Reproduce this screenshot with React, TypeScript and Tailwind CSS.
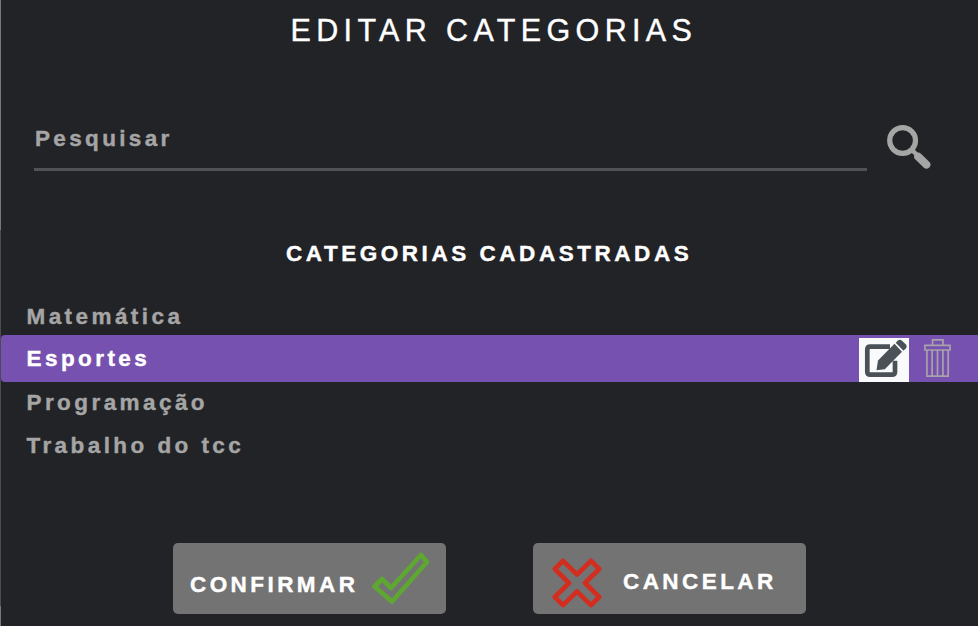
const rows = ["Matemática", "Esportes", "Programação", "Trabalho do tcc"];

function SearchIcon() {
  return (
    <svg className="mt-[-2px] ml-5 h-[46px] w-[46px]" viewBox="0 0 46 46" fill="none" stroke="#a5a5a5">
      <circle cx="15.6" cy="17.5" r="12.9" strokeWidth="5.2" />
      <path d="M24 26L30 32" strokeWidth="4.4" />
      <path d="M31.2 33.7L39.4 41.6" strokeWidth="8" strokeLinecap="round" />
    </svg>
  );
}

function EditIcon() {
  return (
    <svg className="h-[44px] w-[50px] bg-[#f9fafc]" viewBox="0 0 50 44">
      <path d="M31 8.6H11.3Q8.3 8.6 8.3 11.6V33.7Q8.3 36.7 11.3 36.7H33Q36 36.7 36 33.7V22.7" fill="none" stroke="#4a5157" strokeWidth="4.7" />
      <path d="M17.5 32.2L19 22.5L35.5 5.8L43 13.7L25.8 31.2Z" fill="#4a5157" />
      <path d="M36.7 4.8L39 2.6Q41 1 43 2.8L47 6.5Q48.5 8.4 47 10.3L44.4 12.8Z" fill="#4a5157" />
      <path d="M35.8 5L44.2 13.5" stroke="#f9fafc" strokeWidth="0.8" />
    </svg>
  );
}

function TrashIcon() {
  return (
    <svg className="ml-[15px] h-[44px] w-7" viewBox="0 0 28 44" fill="none" stroke="#a7a3a9" strokeWidth="1.7">
      <path d="M8.6 7V1.9H19V7M.9 7.3H26V12H.9ZM2.9 12V38.2H24.2V12M8.1 12V38M13.5 12V38M18.9 12V38" />
    </svg>
  );
}

export default function App() {
  return (
    <main className="flex h-[626px] w-[978px] bg-[#222327] font-['Liberation_Sans',Arial,sans-serif] text-[22.5px] leading-[43px] font-bold tracking-[3.43px] text-white [-webkit-text-stroke:0.4px]">
      <div className="flex w-px shrink-0 flex-col">
        <div className="h-[230px] bg-[#77787a]" />
        <div className="h-[376px] bg-[#4b4c50]" />
        <div className="h-5 bg-[#77787a]" />
      </div>
      <div className="flex min-w-0 flex-1 flex-col">
        <h1 className="mt-[9px] ml-[289.5px] text-[30.5px] font-normal tracking-[5.35px] whitespace-nowrap">EDITAR CATEGORIAS</h1>
        <div className="mt-[73px] ml-[33px] flex h-[46px]">
          <div className="h-[46px] w-[833px] border-b-3 border-[#515254] pl-px leading-[28px] tracking-[3.35px] text-[#a5a5a5]">Pesquisar</div>
          <SearchIcon />
        </div>
        <h2 className="mt-[61px] ml-[285px] tracking-[3.54px] whitespace-nowrap">CATEGORIAS CADASTRADAS</h2>
        <ul className="mt-5 text-[#a5a5a5]">
          {rows.map((row) =>
            row === "Esportes" ? (
              <li key={row} className="-mt-[3px] -mb-px flex h-[47px] items-end rounded-[4px] rounded-r-none bg-[#7751b0] pl-[25.5px] text-white">
                <span className="w-[832.5px] self-center">{row}</span>
                <EditIcon />
                <TrashIcon />
              </li>
            ) : (
              <li key={row} className="h-[43px] pl-[25.5px]">{row}</li>
            )
          )}
        </ul>
        <div className="mt-[76px] ml-[172px] flex gap-[87px]">
          <button className="flex h-[71px] w-[273px] items-center rounded-[5px] bg-[#737373] pl-[17px] tracking-[3.43px]">
            <span className="w-[181px] pt-[12px] text-left">CONFIRMAR</span>
            <svg className="h-[54px] w-[58px]" viewBox="0 0 58 54" fill="none" stroke="#5ea832" strokeWidth="4.6" strokeLinejoin="round">
              <path d="M3.5 34.5L11 27L20 36L50 3L56 10L21 49.5Z" />
            </svg>
          </button>
          <button className="flex h-[71px] w-[273px] items-center rounded-[5px] bg-[#737373] pl-[19px] tracking-[3.43px]">
            <svg className="mt-2 h-[50px] w-[50px]" viewBox="0 0 50 50" fill="none" stroke="#d32d20" strokeWidth="4.6" strokeLinejoin="round">
              <path d="M2.8 11L11 2.8L25 16.5L39 2.8L47.2 11L33 25L47.2 39L39 47.2L25 33.5L11 47.2L2.8 39L17 25Z" />
            </svg>
            <span className="ml-[21px] pt-[6px]">CANCELAR</span>
          </button>
        </div>
      </div>
    </main>
  );
}
